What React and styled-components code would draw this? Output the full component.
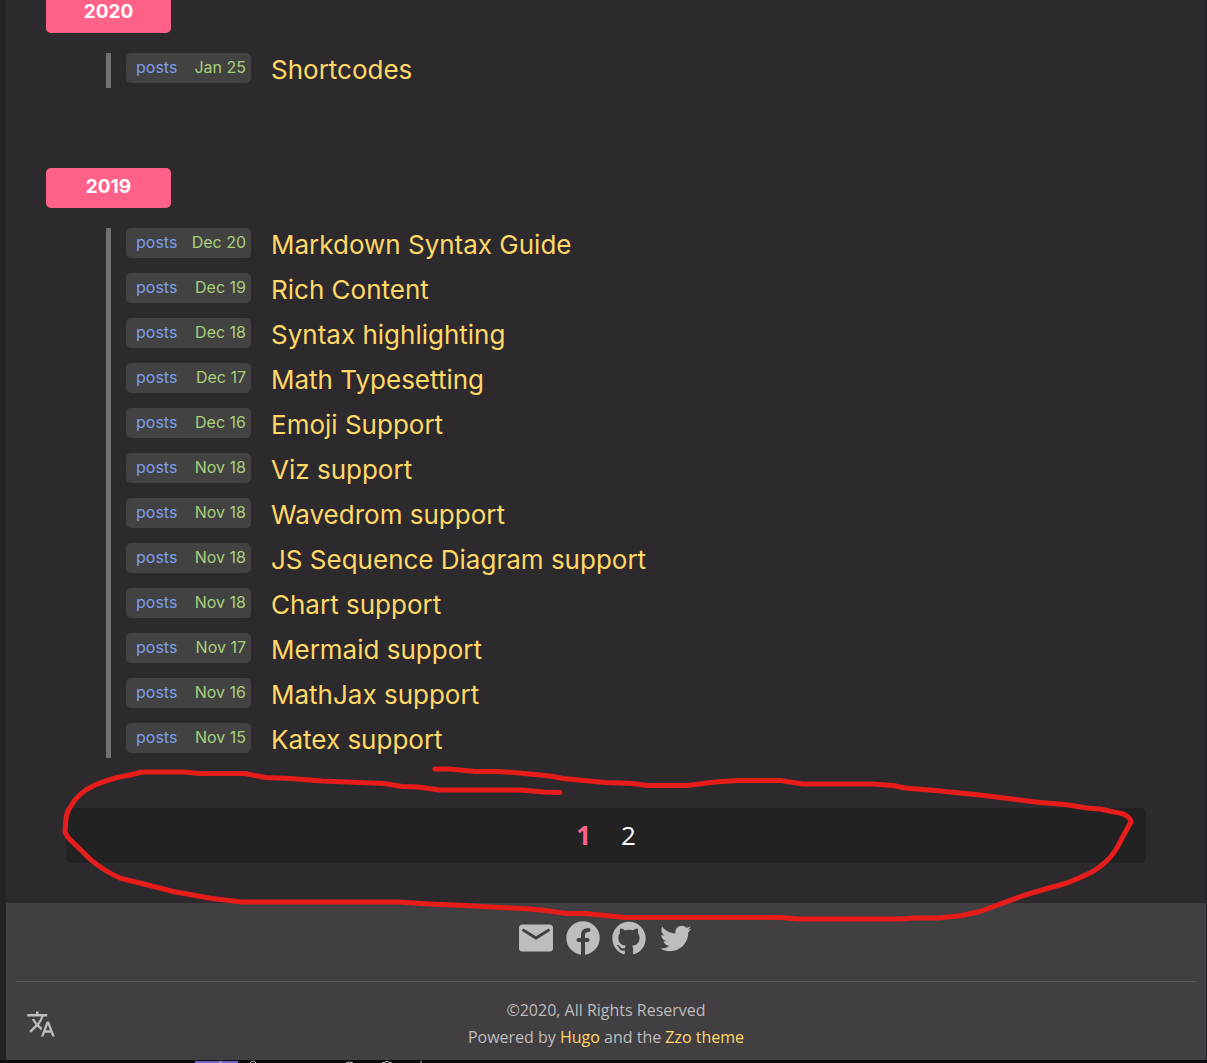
import React from "react";
import styled, { createGlobalStyle } from "styled-components";
import { MdTranslate } from "react-icons/md";

const display = `Inter, "Noto Sans", sans-serif`;
const body = `"Open Sans", "Noto Sans", sans-serif`;

const GlobalStyle = createGlobalStyle`
  * { box-sizing: border-box; }
  body { margin: 0; background: #0c0b10; overflow: hidden; }
  a { color: inherit; text-decoration: none; }
`;

const Frame = styled.div`
  border-left: 6px solid #222222;
  border-right: 1px solid #222026;
  background: #2d2a2e;
  font-family: ${body};
  overflow: hidden;
`;

const Main = styled.main`
  position: relative;
  margin-top: -7px;
  padding: 0 40px 40px;
`;

const YearGroup = styled.section`
  & + & { margin-top: 80px; }
`;

const Year = styled.h2`
  width: 125px;
  height: 40px;
  margin: 0 0 20px;
  border-radius: 5px;
  background: #ff6188;
  color: #ffffff;
  font: 700 19px/38px ${display};
  text-align: center;
`;

const PostList = styled.ul`
  display: grid;
  gap: 10px;
  margin: 0 0 0 60px;
  padding: 0 0 0 15px;
  border-left: 5px solid #727072;
  list-style: none;
`;

const Post = styled.li`
  display: flex;
  gap: 20px;
  height: 35px;
`;

const Meta = styled.div`
  display: flex;
  justify-content: space-between;
  flex: none;
  width: 125px;
  height: 30px;
  padding: 0 5px 0 10px;
  border-radius: 5px;
  background: #424242;
  color: #a9cf7c;
  font: 400 16px/28px ${display};
  white-space: nowrap;
`;

const Section = styled.a`
  color: #7c9fee;
`;

const Title = styled.a`
  color: #ffd866;
  font: 400 26px/33px ${display};
`;

const Pager = styled.nav`
  display: flex;
  justify-content: center;
  gap: 30px;
  margin: 50px 20px 0;
  border-radius: 5px;
  background: #222222;
  font: 400 26px/55px ${body};
`;

const Page = styled.a`
  color: ${(p) => (p.$current ? "#ff6188" : "#ffffff")};
  font-weight: ${(p) => (p.$current ? 700 : 400)};
`;

const Footer = styled.footer`
  padding: 0 10px;
  background: #423f42;
  color: #bdbdbd;
`;

const Social = styled.div`
  display: flex;
  justify-content: center;
  gap: 6px;
  height: 79px;
  padding-top: 15px;
  border-bottom: 1px solid #5b595c;
`;

const SocialLink = styled.a`
  height: 40px;
  svg { display: block; }
`;

const Legal = styled.div`
  display: grid;
  grid-template-columns: 50px 1fr 50px;
  align-items: center;
  height: 78px;
  padding-top: 6px;
  font: 400 16px/27px ${body};
  text-align: center;
  p { margin: 0; }
  a { color: #ffd866; }
`;

const Language = styled.button`
  display: flex;
  justify-content: center;
  padding: 0;
  border: 0;
  background: none;
  color: #bdbdbd;
`;

const Ink = styled.svg`
  position: absolute;
  left: 0;
  top: 0;
  pointer-events: none;
  overflow: visible;
`;

const Strip = styled.div`
  height: 3px;
  svg { display: block; }
`;

const groups = [
  ["2020", [["Jan 25", "Shortcodes"]]],
  ["2019", [
    ["Dec 20", "Markdown Syntax Guide"],
    ["Dec 19", "Rich Content"],
    ["Dec 18", "Syntax highlighting"],
    ["Dec 17", "Math Typesetting"],
    ["Dec 16", "Emoji Support"],
    ["Nov 18", "Viz support"],
    ["Nov 18", "Wavedrom support"],
    ["Nov 18", "JS Sequence Diagram support"],
    ["Nov 18", "Chart support"],
    ["Nov 17", "Mermaid support"],
    ["Nov 16", "MathJax support"],
    ["Nov 15", "Katex support"],
  ]],
];

const Icon = ({ box = "0 0 40 40", children }) => (
  <svg width="40" height="40" viewBox={box} fill="currentColor" aria-hidden="true">{children}</svg>
);

const github = "M12 .297c-6.63 0-12 5.373-12 12 0 5.303 3.438 9.8 8.205 11.385.6.113.82-.258.82-.577 0-.285-.01-1.04-.015-2.04-3.338.724-4.042-1.61-4.042-1.61C4.422 18.07 3.633 17.7 3.633 17.7c-1.087-.744.084-.729.084-.729 1.205.084 1.838 1.236 1.838 1.236 1.07 1.835 2.809 1.305 3.495.998.108-.776.417-1.305.76-1.605-2.665-.3-5.466-1.332-5.466-5.93 0-1.31.465-2.38 1.235-3.22-.135-.303-.54-1.523.105-3.176 0 0 1.005-.322 3.3 1.23.96-.267 1.98-.399 3-.405 1.02.006 2.04.138 3 .405 2.28-1.552 3.285-1.23 3.285-1.23.645 1.653.24 2.873.12 3.176.765.84 1.23 1.91 1.23 3.22 0 4.61-2.805 5.625-5.475 5.92.42.36.81 1.096.81 2.22 0 1.606-.015 2.896-.015 3.286 0 .315.21.69.825.57C20.565 22.092 24 17.592 24 12.297c0-6.627-5.373-12-12-12";
const twitter = "M22.46 6c-.77.35-1.6.58-2.46.69.88-.53 1.56-1.37 1.88-2.38-.83.5-1.75.85-2.72 1.05C18.37 4.5 17.26 4 16 4c-2.35 0-4.27 1.92-4.27 4.29 0 .34.04.67.11.98C8.28 9.09 5.11 7.38 3 4.79c-.37.63-.58 1.37-.58 2.15 0 1.49.75 2.81 1.91 3.56-.71 0-1.37-.2-1.95-.5v.03c0 2.08 1.48 3.82 3.44 4.21a4.22 4.22 0 0 1-1.93.07 4.28 4.28 0 0 0 4 2.98 8.521 8.521 0 0 1-5.33 1.84c-.34 0-.68-.02-1.02-.06C3.44 20.29 5.7 21 8.12 21 16 21 20.33 14.46 20.33 8.79c0-.19 0-.37-.01-.56.84-.6 1.56-1.36 2.14-2.23z";

export default function App() {
  return (
    <>
      <GlobalStyle />
      <Frame>
        <Main>
          {groups.map(([year, posts]) => (
            <YearGroup key={year}>
              <Year>{year}</Year>
              <PostList>
                {posts.map(([date, title]) => (
                  <Post key={title}>
                    <Meta>
                      <Section href="#posts">posts</Section>
                      <time>{date}</time>
                    </Meta>
                    <Title href="#post">{title}</Title>
                  </Post>
                ))}
              </PostList>
            </YearGroup>
          ))}
          <Pager aria-label="Pagination">
            <Page href="#1" $current aria-current="page">1</Page>
            <Page href="#2">2</Page>
          </Pager>
          <Ink width="1200" height="930" viewBox="6 -7 1200 930" fill="none" stroke="#e71d1b" strokeWidth="5" strokeLinecap="round" strokeLinejoin="round" aria-hidden="true">
            <path d="M560 792.500L544 792L520 790H440L418 787L402 786.500L384 783.500L322 781L290 778.500L265 777.500L245 773.500H200L184 772H142L130 775L117 777.500Q104 781 94 785.500Q86 789 80 794.500Q74 800 71 806Q67 811 66 818L65 832Q67 837 70 839.500L90 859Q103 870.500 121 878.500L148 885L173 891.500L212 898.500L242 902H398L430 904L465 905.500L530 909L545 910.500L567 913.500H585L625 917.500H780L798 919H900L915 918H938L962 915.500L980 911.500L1022 896L1042 890L1067 883Q1080 878 1093 871.500Q1108 862 1115 851Q1120 843 1122 838L1131 822Q1131 819 1126 815.500Q1122 813 1114 812L1100 809L1087 808L1065 804.500L1040 802.500L1004 798L980 795L935 790.500L905 788L893 785.500L873 784H803L780 780.500H738L715 782L687 785.500H647L633 783.500L605 782.500L563 778.500L550 776L514 772.500L497 771.500H475L449 769H435" />
          </Ink>
        </Main>
        <Footer>
          <Social>
            <SocialLink href="#mail" aria-label="Email">
              <Icon>
                <rect x="2" y="6.500" width="34" height="27" rx="3.500" />
                <path d="M6.500 12.300L19 20L31.500 12.300" fill="none" stroke="#423f42" strokeWidth="2.800" strokeLinecap="round" />
              </Icon>
            </SocialLink>
            <SocialLink href="#facebook" aria-label="Facebook">
              <Icon>
                <circle cx="20" cy="20" r="16.700" />
                <path d="M15.500 22H24.500M20 38V17Q20 12 25.500 12" fill="none" stroke="#423f42" strokeWidth="4" strokeLinecap="round" />
              </Icon>
            </SocialLink>
            <SocialLink href="#github" aria-label="GitHub">
              <Icon box="-2.4 -2.4 28.8 28.8"><path d={github} /></Icon>
            </SocialLink>
            <SocialLink href="#twitter" aria-label="Twitter">
              <Icon box="-1.8 -1.1 26.6 26.6"><path d={twitter} /></Icon>
            </SocialLink>
          </Social>
          <Legal>
            <Language type="button" aria-label="Language"><MdTranslate size={30} /></Language>
            <div>
              <p>©2020, All Rights Reserved</p>
              <p>Powered by <a href="#hugo">Hugo</a> and the <a href="#zzo">Zzo theme</a></p>
            </div>
          </Legal>
        </Footer>
      </Frame>
      <Strip>
        <svg width="430" height="3" viewBox="0 0 430 3" fill="none" stroke="#c4c4c4" aria-hidden="true">
          <path d="M195 2H238" stroke="#7563c8" strokeWidth="2" />
          <path d="M219 3L222 1M250 3Q253 -1 256 3M346 3Q350 1 353 3M382 3Q387 0 392 3M421 1V3" />
        </svg>
      </Strip>
    </>
  );
}
